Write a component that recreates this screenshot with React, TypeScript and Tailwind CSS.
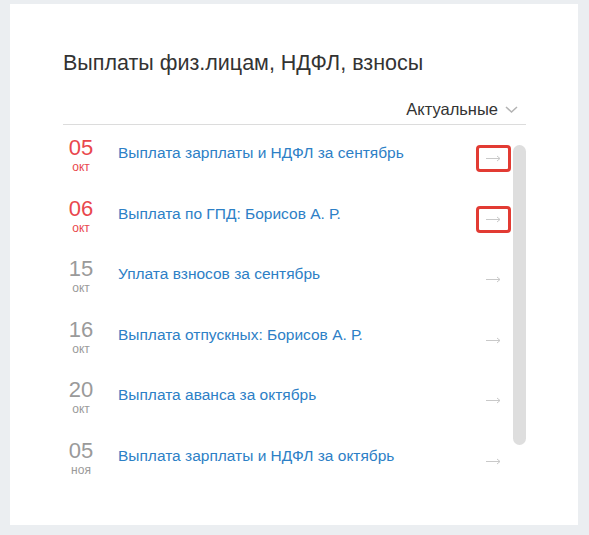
import React from 'react';

type Payment = {
  day: string;
  month: string;
  title: string;
  urgent?: boolean;
};

const payments: Payment[] = [
  { day: '05', month: 'окт', title: 'Выплата зарплаты и НДФЛ за сентябрь', urgent: true },
  { day: '06', month: 'окт', title: 'Выплата по ГПД: Борисов А. Р.', urgent: true },
  { day: '15', month: 'окт', title: 'Уплата взносов за сентябрь' },
  { day: '16', month: 'окт', title: 'Выплата отпускных: Борисов А. Р.' },
  { day: '20', month: 'окт', title: 'Выплата аванса за октябрь' },
  { day: '05', month: 'ноя', title: 'Выплата зарплаты и НДФЛ за октябрь' },
];

const ArrowRight = () => (
  <svg width="15" height="7" viewBox="0 0 15 7" fill="none">
    <line x1="0" y1="3.5" x2="14" y2="3.5" stroke="#c9c9c9" strokeWidth="1" />
    <polyline points="11,1 14,3.5 11,6" stroke="#c9c9c9" strokeWidth="1" fill="none" />
  </svg>
);

const ChevronDown = () => (
  <svg width="13" height="7" viewBox="0 0 13 7" fill="none">
    <polyline points="1,1 6.5,6 12,1" stroke="#b3b3b3" strokeWidth="1.5" fill="none" />
  </svg>
);

const PaymentRow = ({ item }: { item: Payment }) => (
  <div className="flex h-[60.6px] items-start">
    <div className="w-[36px] pt-[12px] text-center">
      <div
        className={`text-[22px] leading-[22px] ${item.urgent ? 'text-[#e9474d]' : 'text-[#9a9a9a]'}`}
      >
        {item.day}
      </div>
      <div
        className={`mt-[1px] text-[12px] leading-[14px] ${item.urgent ? 'text-[#e9474d]' : 'text-[#9a9a9a]'}`}
      >
        {item.month}
      </div>
    </div>
    <a href="#" className="ml-[19px] pt-[18px] text-[15.5px] leading-[20px] text-[#2d80c6]">
      {item.title}
    </a>
    <div
      className={`ml-auto mt-[20px] flex h-[27px] w-[35px] items-center justify-center rounded-[4px] border-[3px] ${
        item.urgent ? 'border-[#e23b33]' : 'border-transparent'
      }`}
    >
      <ArrowRight />
    </div>
  </div>
);

const App = () => {
  return (
    <div className="min-h-screen bg-[#ebeef1] pl-[10px] pt-[4px] font-[family-name:'Liberation_Sans',Arial,sans-serif]">
      <div className="h-[521px] w-[568px] bg-white pl-[53px] pr-[52px] pt-[47px]">
        <h1 className="text-[21.5px] leading-[24px] text-[#333]">Выплаты физ.лицам, НДФЛ, взносы</h1>

        <div className="mt-[24px] flex h-[20px] items-center justify-end gap-[7px] pr-[8px]">
          <span className="text-[16.5px] leading-[20px] text-[#333]">Актуальные</span>
          <ChevronDown />
        </div>
        <div className="mt-[5px] h-px bg-[#dcdcdc]" />

        <div className="flex">
          <div className="flex-1">
            {payments.map((item, i) => (
              <PaymentRow key={i} item={item} />
            ))}
          </div>
          <div className="ml-[2px] mt-[20px] h-[300px] w-[13px] rounded-full bg-[#dedede]" />
        </div>
      </div>
    </div>
  );
};

export default App;
